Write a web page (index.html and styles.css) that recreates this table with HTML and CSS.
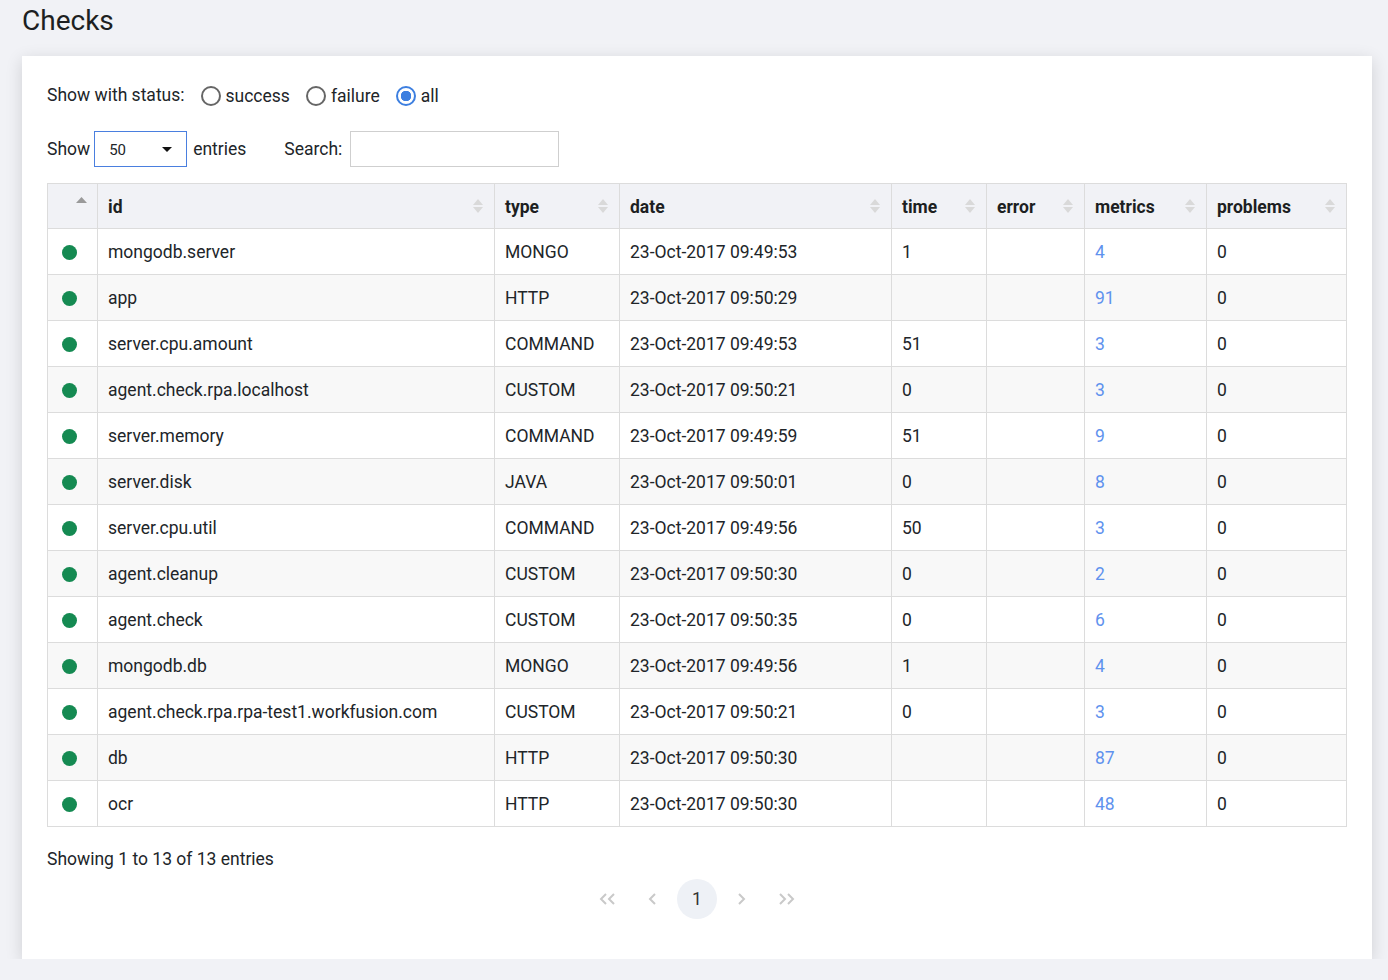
FILE: index.html
```html
<!DOCTYPE html>
<html lang="en">
<head>
<meta charset="utf-8">
<title>Checks</title>
<link rel="stylesheet" href="styles.css">
</head>
<body>
<h1 class="page-title">Checks</h1>
<div class="card">
  <div class="status-filter">
    <span class="filter-label">Show with status:</span>
    <label class="radio"><input type="radio" name="status"><span>success</span></label>
    <label class="radio"><input type="radio" name="status"><span>failure</span></label>
    <label class="radio"><input type="radio" name="status" checked><span>all</span></label>
  </div>
  <div class="controls">
    <span class="ctl-text">Show</span>
    <div class="select"><span>50</span><svg class="caret" width="10" height="5" viewBox="0 0 10 5"><path d="M0 0h10L5 5z" fill="#111"/></svg></div>
    <span class="ctl-text entries">entries</span>
    <span class="ctl-text search-label">Search:</span>
    <input class="search" type="text">
  </div>
  <table class="grid">
    <colgroup>
      <col style="width:50px"><col style="width:397px"><col style="width:125px"><col style="width:272px"><col style="width:95px"><col style="width:98px"><col style="width:122px"><col style="width:140px">
    </colgroup>
    <thead>
      <tr>
        <th class="c-status"><svg class="asc" width="11" height="6" viewBox="0 0 11 6"><path d="M0 6L5.5 0 11 6z" fill="#9a9a9a"/></svg></th>
        <th><span>id</span><i class="sort"></i></th>
        <th><span>type</span><i class="sort"></i></th>
        <th><span>date</span><i class="sort"></i></th>
        <th><span>time</span><i class="sort"></i></th>
        <th><span>error</span><i class="sort"></i></th>
        <th><span>metrics</span><i class="sort"></i></th>
        <th><span>problems</span><i class="sort"></i></th>
      </tr>
    </thead>
    <tbody>
      <tr><td class="c-status"><i class="dot"></i></td><td>mongodb.server</td><td>MONGO</td><td>23-Oct-2017 09:49:53</td><td>1</td><td></td><td><a>4</a></td><td>0</td></tr>
      <tr><td class="c-status"><i class="dot"></i></td><td>app</td><td>HTTP</td><td>23-Oct-2017 09:50:29</td><td></td><td></td><td><a>91</a></td><td>0</td></tr>
      <tr><td class="c-status"><i class="dot"></i></td><td>server.cpu.amount</td><td>COMMAND</td><td>23-Oct-2017 09:49:53</td><td>51</td><td></td><td><a>3</a></td><td>0</td></tr>
      <tr><td class="c-status"><i class="dot"></i></td><td>agent.check.rpa.localhost</td><td>CUSTOM</td><td>23-Oct-2017 09:50:21</td><td>0</td><td></td><td><a>3</a></td><td>0</td></tr>
      <tr><td class="c-status"><i class="dot"></i></td><td>server.memory</td><td>COMMAND</td><td>23-Oct-2017 09:49:59</td><td>51</td><td></td><td><a>9</a></td><td>0</td></tr>
      <tr><td class="c-status"><i class="dot"></i></td><td>server.disk</td><td>JAVA</td><td>23-Oct-2017 09:50:01</td><td>0</td><td></td><td><a>8</a></td><td>0</td></tr>
      <tr><td class="c-status"><i class="dot"></i></td><td>server.cpu.util</td><td>COMMAND</td><td>23-Oct-2017 09:49:56</td><td>50</td><td></td><td><a>3</a></td><td>0</td></tr>
      <tr><td class="c-status"><i class="dot"></i></td><td>agent.cleanup</td><td>CUSTOM</td><td>23-Oct-2017 09:50:30</td><td>0</td><td></td><td><a>2</a></td><td>0</td></tr>
      <tr><td class="c-status"><i class="dot"></i></td><td>agent.check</td><td>CUSTOM</td><td>23-Oct-2017 09:50:35</td><td>0</td><td></td><td><a>6</a></td><td>0</td></tr>
      <tr><td class="c-status"><i class="dot"></i></td><td>mongodb.db</td><td>MONGO</td><td>23-Oct-2017 09:49:56</td><td>1</td><td></td><td><a>4</a></td><td>0</td></tr>
      <tr><td class="c-status"><i class="dot"></i></td><td>agent.check.rpa.rpa-test1.workfusion.com</td><td>CUSTOM</td><td>23-Oct-2017 09:50:21</td><td>0</td><td></td><td><a>3</a></td><td>0</td></tr>
      <tr><td class="c-status"><i class="dot"></i></td><td>db</td><td>HTTP</td><td>23-Oct-2017 09:50:30</td><td></td><td></td><td><a>87</a></td><td>0</td></tr>
      <tr><td class="c-status"><i class="dot"></i></td><td>ocr</td><td>HTTP</td><td>23-Oct-2017 09:50:30</td><td></td><td></td><td><a>48</a></td><td>0</td></tr>
    </tbody>
  </table>
  <div class="info">Showing 1 to 13 of 13 entries</div>
  <div class="pager">
    <span class="pg"><svg width="20" height="12" viewBox="0 0 20 12"><path d="M7 1L2 6l5 5M15 1l-5 5 5 5" fill="none" stroke="#c9c9c9" stroke-width="2"/></svg></span>
    <span class="pg"><svg width="10" height="12" viewBox="0 0 10 12"><path d="M7 1L2 6l5 5" fill="none" stroke="#c9c9c9" stroke-width="2"/></svg></span>
    <span class="pg current">1</span>
    <span class="pg"><svg width="10" height="12" viewBox="0 0 10 12"><path d="M3 1l5 5-5 5" fill="none" stroke="#c9c9c9" stroke-width="2"/></svg></span>
    <span class="pg"><svg width="20" height="12" viewBox="0 0 20 12"><path d="M5 1l5 5-5 5M13 1l5 5-5 5" fill="none" stroke="#c9c9c9" stroke-width="2"/></svg></span>
  </div>
</div>
</body>
</html>
```

FILE: styles.css
```css
html, body {
  margin: 0;
  padding: 0;
}
body {
  background: #f1f2f6;
  font-family: Roboto, "Liberation Sans", sans-serif;
  color: #212529;
  padding: 0 16px 0 22px;
}
.page-title {
  margin: 0;
  font-size: 28px;
  font-weight: 400;
  line-height: 42px;
  height: 56px;
  color: #1d1f22;
}
.card {
  background: #fff;
  width: 1350px;
  height: 903px;
  box-sizing: border-box;
  padding: 22px 25px 0 25px;
  box-shadow: 0 4px 16px rgba(0, 0, 0, 0.14);
}
.status-filter {
  display: flex;
  align-items: center;
  height: 34px;
  font-size: 17.5px;
}
.filter-label {
  margin-right: 16px;
}
.radio {
  display: flex;
  align-items: center;
  margin-right: 16px;
  position: relative;
  top: 1px;
}
.radio input {
  appearance: none;
  -webkit-appearance: none;
  width: 20px;
  height: 20px;
  margin: 0 5px 0 0;
  border: 2px solid #666;
  border-radius: 50%;
  box-sizing: border-box;
  background: #fff;
}
.radio input:checked {
  border-color: #3d7fe0;
  background: radial-gradient(circle, #3d7fe0 0 5px, #fff 5.5px);
}
.controls {
  display: flex;
  align-items: center;
  margin-top: 19px;
  height: 36px;
  font-size: 17.5px;
}
.select {
  width: 93px;
  height: 36px;
  box-sizing: border-box;
  border: 1px solid #4a7fdf;
  margin-left: 4px;
  display: flex;
  align-items: center;
  justify-content: space-between;
  padding: 2px 14px 0 14px;
  font-size: 15px;
}
.caret {
  margin-top: -1px;
}
.entries {
  margin-left: 6px;
}
.search-label {
  margin-left: 38px;
}
.search {
  margin-left: 8px;
  width: 209px;
  height: 36px;
  box-sizing: border-box;
  border: 1px solid #cfcfcf;
  padding: 0 8px;
  font-family: inherit;
  font-size: 16px;
}
.grid {
  margin-top: 16px;
  border-collapse: collapse;
  table-layout: fixed;
  width: 1299px;
  font-size: 17.5px;
}
.grid th, .grid td {
  border: 1px solid #dcdcdc;
  padding: 1px 10px 0;
  height: 44px;
  text-align: left;
  white-space: nowrap;
}
.grid th {
  height: 43px;
  background: #f1f2f6;
  font-weight: 700;
  color: #1d1f22;
  position: relative;
}
.grid tbody tr:nth-child(even) td {
  background: #f8f8f8;
}
.grid .c-status {
  text-align: center;
  padding: 0;
}
.asc {
  display: block;
  margin: -9px 0 0 28px;
}
.sort {
  position: absolute;
  right: 10px;
  top: 15px;
  width: 11px;
  height: 15px;
}
.sort::before, .sort::after {
  content: "";
  position: absolute;
  left: 0;
  border-left: 5.5px solid transparent;
  border-right: 5.5px solid transparent;
}
.sort::before {
  top: 0;
  border-bottom: 6px solid #d9d9d9;
}
.sort::after {
  top: 8px;
  border-top: 6px solid #d9d9d9;
}
.dot {
  display: inline-block;
  width: 15px;
  height: 15px;
  border-radius: 50%;
  background: #158a52;
  vertical-align: middle;
  margin: 0 0 0 -6px;
}
.grid a {
  color: #5f92ee;
  text-decoration: none;
}
.info {
  margin-top: 22px;
  font-size: 17.5px;
}
.pager {
  display: flex;
  justify-content: center;
  align-items: center;
  margin-top: 10px;
}
.pg {
  width: 44px;
  height: 40px;
  display: flex;
  align-items: center;
  justify-content: center;
  font-size: 17.5px;
}
.pg.current {
  width: 40px;
  margin: 0 2px;
  border-radius: 50%;
  background: #eef1f6;
  color: #333;
}
```
